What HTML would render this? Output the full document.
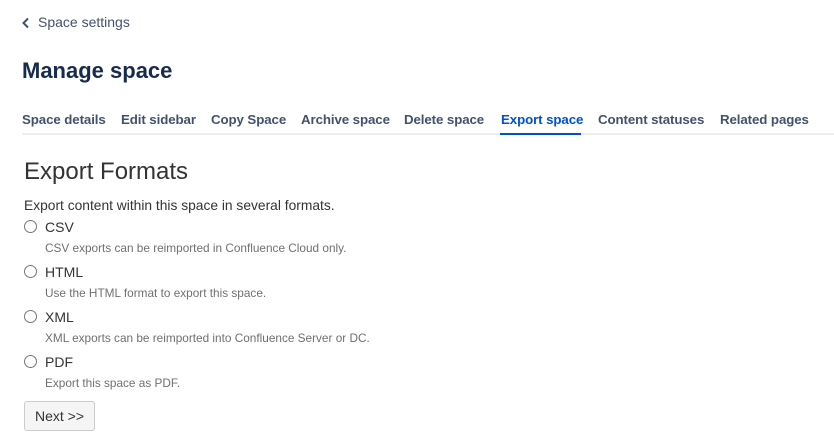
<!DOCTYPE html>
<html><head><style>
body{margin:0;width:834px;height:444px;background:#fff;font-family:"Liberation Sans",sans-serif;position:relative;overflow:hidden}
.a{position:absolute;white-space:nowrap}
.tab{position:absolute;top:112px;font-size:13.3px;color:#42526e;font-weight:bold;letter-spacing:-0.1px}
.r{position:absolute;left:24px;width:11px;height:11px;border:1px solid #767676;border-radius:50%}
.l{position:absolute;left:45px;font-size:14px;color:#333}
.d{position:absolute;left:45px;font-size:11.8px;color:#707070}
</style></head><body>
<svg class="a" style="left:21px;top:17px" width="10" height="12" viewBox="0 0 10 12"><path d="M7 1.5L2.5 6L7 10.5" stroke="#42526e" stroke-width="2" fill="none"/></svg>
<div class="a" style="left:38px;top:14px;font-size:14px;color:#42526e">Space settings</div>
<div class="a" style="left:22px;top:58px;font-size:22px;color:#172b4d;font-weight:bold">Manage space</div>
<div class="tab" style="left:22px">Space details</div>
<div class="tab" style="left:121px">Edit sidebar</div>
<div class="tab" style="left:211px">Copy Space</div>
<div class="tab" style="left:301px">Archive space</div>
<div class="tab" style="left:404px">Delete space</div>
<div class="tab" style="left:501px;color:#0052cc">Export space</div>
<div class="tab" style="left:598px">Content statuses</div>
<div class="tab" style="left:720px">Related pages</div>
<div class="a" style="left:22px;top:133px;width:812px;height:2px;background:#ebecf0"></div>
<div class="a" style="left:500px;top:133px;width:81px;height:2px;background:#0052cc"></div>
<div class="a" style="left:24px;top:158px;font-size:24px;color:#333;font-weight:300">Export Formats</div>
<div class="a" style="left:24px;top:198px;font-size:13.8px;color:#333">Export content within this space in several formats.</div>
<div class="r" style="top:220px"></div><div class="l a" style="top:219px">CSV</div>
<div class="d a" style="top:241px">CSV exports can be reimported in Confluence Cloud only.</div>
<div class="r" style="top:265px"></div><div class="l a" style="top:264px">HTML</div>
<div class="d a" style="top:286px">Use the HTML format to export this space.</div>
<div class="r" style="top:310px"></div><div class="l a" style="top:309px">XML</div>
<div class="d a" style="top:331px">XML exports can be reimported into Confluence Server or DC.</div>
<div class="r" style="top:355px"></div><div class="l a" style="top:354px">PDF</div>
<div class="d a" style="top:376px">Export this space as PDF.</div>
<div class="a" style="left:24px;top:401px;width:69px;height:28px;border:1px solid #ccc;border-radius:3px;background:#f5f5f5;font-size:14px;color:#333;text-align:center;line-height:28px">Next &gt;&gt;</div>
</body></html>
